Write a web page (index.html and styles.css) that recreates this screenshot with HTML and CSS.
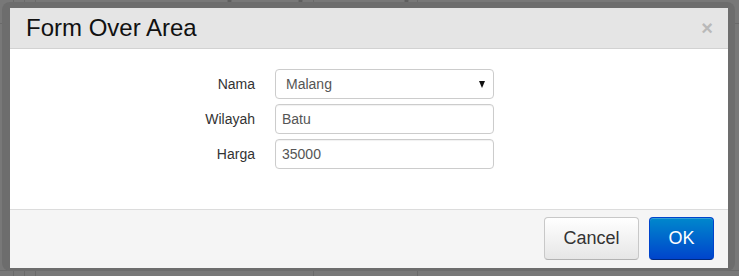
FILE: index.html
```html
<!DOCTYPE html>
<html lang="en">
<head>
  <meta charset="UTF-8">
  <title>Form Over Area</title>
  <link rel="stylesheet" href="styles.css">
</head>
<body>
  <!-- faded table behind the modal overlay, only its delete icons peek out -->
  <div class="backdrop">
    <span class="mark mark-1"></span>
    <span class="mark mark-2"></span>
    <span class="mark mark-3"></span>
  </div>

  <div class="overlay">
    <div class="frame">
      <div class="modal">
        <div class="modal-header">
          <h3>Form Over Area</h3>
          <span class="close">&times;</span>
        </div>

        <form class="modal-body">
          <label for="nama">Nama</label>
          <div class="select-wrap">
            <select id="nama">
              <option>Malang</option>
              <option>Surabaya</option>
            </select>
          </div>

          <label for="wilayah">Wilayah</label>
          <input id="wilayah" type="text" value="Batu">

          <label for="harga">Harga</label>
          <input id="harga" type="text" value="35000">
        </form>

        <div class="modal-footer">
          <button class="btn btn-cancel">Cancel</button>
          <button class="btn btn-primary">OK</button>
        </div>
      </div>
    </div>
  </div>
</body>
</html>
```

FILE: styles.css
```css
html, body {
  margin: 0;
  height: 100%;
}

body {
  font-family: "Liberation Sans", Arial, sans-serif;
  background-color: #787878;
  background-image:
    linear-gradient(#6a6a6a, #6a6a6a),
    linear-gradient(#6a6a6a, #6a6a6a),
    linear-gradient(#6a6a6a, #6a6a6a),
    linear-gradient(#6a6a6a, #6a6a6a),
    linear-gradient(#6a6a6a, #6a6a6a),
    linear-gradient(#6a6a6a, #6a6a6a),
    linear-gradient(#6a6a6a, #6a6a6a);
  background-size: 1px 100%, 1px 100%, 1px 100%, 1px 100%, 1px 100%, 100% 1px, 100% 1px;
  background-position: 13px 0, 24px 0, 35px 0, 313px 0, 417px 0, 0 23px, 0 270px;
  background-repeat: no-repeat;
  overflow: hidden;
}

.backdrop {
  position: absolute;
  inset: 0;
}

/* little x icons, drawn with two bars */
.mark {
  position: absolute;
  top: -3px;
  width: 9px;
  height: 9px;
}

.mark::before,
.mark::after {
  content: "";
  position: absolute;
  left: 0;
  top: 3px;
  width: 9px;
  height: 2px;
  background: #5f5f5f;
  transform: rotate(45deg);
}

.mark::after {
  transform: rotate(-45deg);
}

.mark-1 { left: 225px; }
.mark-2 { left: 296px; }
.mark-3 { left: 402px; }

.overlay {
  position: relative;
  padding: 2px;
}

.frame {
  width: 718px;
  padding: 6px 7px 3px 8px;
  background: #6d6d6d;
  border-radius: 8px;
}

.modal {
  background: white;
}

.modal-header {
  display: flex;
  align-items: center;
  justify-content: space-between;
  height: 40px;
  padding: 0 15px 0 16px;
  background: #e5e5e5;
  border-bottom: 1px solid #d2d2d2;
}

.modal-header h3 {
  margin: 0;
  font-size: 24px;
  font-weight: normal;
  line-height: 40px;
  color: #111;
}

.close {
  font-size: 20px;
  font-weight: bold;
  line-height: 20px;
  color: #b9b9b9;
}

.modal-body {
  display: grid;
  grid-template-columns: 245px 219px;
  grid-auto-rows: 30px;
  column-gap: 20px;
  row-gap: 5px;
  align-items: center;
  margin: 0;
  padding: 20px 0 40px;
}

.modal-body label {
  text-align: right;
  font-size: 14px;
  color: #333;
}

.modal-body input,
.modal-body select {
  box-sizing: border-box;
  width: 219px;
  height: 30px;
  margin: 0;
  border: 1px solid #cccccc;
  border-radius: 4px;
  background: white;
  font-family: inherit;
  font-size: 14px;
  color: #555;
  box-shadow: inset 0 1px 1px rgba(0, 0, 0, 0.06);
}

.modal-body input {
  padding: 0 6px;
}

.select-wrap {
  position: relative;
  height: 30px;
}

.modal-body select {
  appearance: none;
  -webkit-appearance: none;
  padding: 0 10px;
  box-shadow: none;
}

.select-wrap::after {
  content: "";
  position: absolute;
  right: 9px;
  top: 12px;
  border-left: 3.5px solid transparent;
  border-right: 3.5px solid transparent;
  border-top: 7px solid #111;
  pointer-events: none;
}

.modal-footer {
  display: flex;
  justify-content: flex-end;
  gap: 10px;
  padding: 7px 14px 8px;
  background: #f5f5f5;
  border-top: 1px solid #dcdcdc;
}

.btn {
  height: 43px;
  padding: 0;
  font-family: inherit;
  font-size: 18px;
  color: #333;
  background: linear-gradient(#ffffff, #e6e6e6);
  border: 1px solid #c8c8c8;
  border-bottom-color: #b3b3b3;
  border-radius: 4px;
  box-shadow: inset 0 1px 0 rgba(255, 255, 255, 0.2);
}

.btn-cancel {
  width: 95px;
}

.btn-primary {
  width: 65px;
  color: white;
  background: linear-gradient(#0088cc, #0044cc);
  border-color: #0044cc #0044cc #002a80;
}
```
